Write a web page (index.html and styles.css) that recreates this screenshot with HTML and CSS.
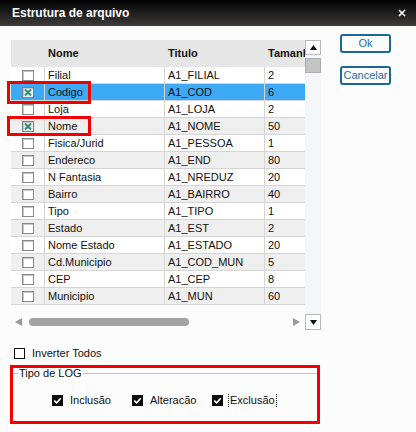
FILE: index.html
```html
<!DOCTYPE html>
<html>
<head>
<meta charset="utf-8">
<link rel="stylesheet" href="styles.css">
</head>
<body>
<div class="window">
  <div class="titlebar">
    <span class="title">Estrutura de arquivo</span>
    <svg class="close" width="8" height="8" viewBox="0 0 8 8"><path d="M1 1L7 7M7 1L1 7" stroke="#fff" stroke-width="1.6"/></svg>
  </div>
  <div class="main">
    <div class="gridbox">
      <div class="grid-area">
        <div class="table">
          <div class="row hdr"><div class="c chk"></div><div class="c">Nome</div><div class="c">Titulo</div><div class="c">Tamanho</div></div>
          <div class="row"><div class="c chk"><span class="cb"></span></div><div class="c">Filial</div><div class="c">A1_FILIAL</div><div class="c">2</div></div>
          <div class="row sel"><div class="c chk"><span class="cb on"></span></div><div class="c">Codigo</div><div class="c">A1_COD</div><div class="c">6</div></div>
          <div class="row"><div class="c chk"><span class="cb"></span></div><div class="c">Loja</div><div class="c">A1_LOJA</div><div class="c">2</div></div>
          <div class="row alt"><div class="c chk"><span class="cb on"></span></div><div class="c">Nome</div><div class="c">A1_NOME</div><div class="c">50</div></div>
          <div class="row"><div class="c chk"><span class="cb"></span></div><div class="c">Fisica/Jurid</div><div class="c">A1_PESSOA</div><div class="c">1</div></div>
          <div class="row alt"><div class="c chk"><span class="cb"></span></div><div class="c">Endereco</div><div class="c">A1_END</div><div class="c">80</div></div>
          <div class="row"><div class="c chk"><span class="cb"></span></div><div class="c">N Fantasia</div><div class="c">A1_NREDUZ</div><div class="c">20</div></div>
          <div class="row alt"><div class="c chk"><span class="cb"></span></div><div class="c">Bairro</div><div class="c">A1_BAIRRO</div><div class="c">40</div></div>
          <div class="row"><div class="c chk"><span class="cb"></span></div><div class="c">Tipo</div><div class="c">A1_TIPO</div><div class="c">1</div></div>
          <div class="row alt"><div class="c chk"><span class="cb"></span></div><div class="c">Estado</div><div class="c">A1_EST</div><div class="c">2</div></div>
          <div class="row"><div class="c chk"><span class="cb"></span></div><div class="c">Nome Estado</div><div class="c">A1_ESTADO</div><div class="c">20</div></div>
          <div class="row alt"><div class="c chk"><span class="cb"></span></div><div class="c">Cd.Municipio</div><div class="c">A1_COD_MUN</div><div class="c">5</div></div>
          <div class="row"><div class="c chk"><span class="cb"></span></div><div class="c">CEP</div><div class="c">A1_CEP</div><div class="c">8</div></div>
          <div class="row alt"><div class="c chk"><span class="cb"></span></div><div class="c">Municipio</div><div class="c">A1_MUN</div><div class="c">60</div></div>
        </div>
        <div class="hscroll">
          <svg class="harrow" width="7" height="8" viewBox="0 0 7 8"><path d="M7 0L0 4L7 8Z" fill="#9a9a9a"/></svg>
          <span class="hthumb"></span>
          <svg class="harrow right" width="7" height="8" viewBox="0 0 7 8"><path d="M0 0L7 4L0 8Z" fill="#9a9a9a"/></svg>
        </div>
      </div>
      <div class="vscroll">
        <div class="vbtn"><svg width="7" height="5" viewBox="0 0 7 5"><path d="M3.5 0L7 5H0Z" fill="#0a0f1c"/></svg></div>
        <div class="vthumb"></div>
        <div class="vbtn down"><svg width="7" height="5" viewBox="0 0 7 5"><path d="M0 0H7L3.5 5Z" fill="#0a0f1c"/></svg></div>
      </div>
      <div class="mark mark1"></div>
      <div class="mark mark2"></div>
    </div>
    <div class="buttons">
      <div class="btn">Ok</div>
      <div class="btn">Cancelar</div>
    </div>
  </div>
  <div class="invert"><span class="box"></span><span>Inverter Todos</span></div>
  <div class="logbox">
    <div class="legend"><span>Tipo de LOG</span></div>
    <div class="opts">
      <div class="opt"><span class="chkd"></span><span class="lbl">Inclusão</span></div>
      <div class="opt"><span class="chkd"></span><span class="lbl">Alteracão</span></div>
      <div class="opt"><span class="chkd"></span><span class="lbl focus">Exclusão</span></div>
    </div>
  </div>
</div>
</body>
</html>
```
FILE: styles.css
```css
* { box-sizing: border-box; }
html, body { margin: 0; padding: 0; }
body {
  width: 416px;
  height: 432px;
  overflow: hidden;
  background: #fcfcfc;
  font-family: "Liberation Sans", Arial, sans-serif;
  font-size: 11px;
  color: #111;
}
.window { width: 416px; height: 432px; }
.titlebar {
  height: 26px;
  background: linear-gradient(#020202, #3d3b3a);
  display: flex;
  align-items: center;
  justify-content: space-between;
  padding: 0 10px 0 12px;
}
.title { color: #fff; font-weight: bold; font-size: 12px; }
.close { display: block; }
.main { display: flex; padding: 8px 0 0 11px; }
.gridbox {
  position: relative;
  display: flex;
  margin-top: 6px;
  width: 310px;
  height: 290px;
}
.grid-area { width: 294px; display: flex; flex-direction: column; }
.table { width: 294px; overflow: hidden; }
.row {
  display: grid;
  grid-template-columns: 34px 120px 100px 80px;
  height: 17px;
  border-bottom: 1px solid #d5d5d5;
  background: #fff;
  line-height: 16px;
  white-space: nowrap;
}
.row.alt { background: #efefef; }
.row.sel { background: #3ea9f5; }
.row.hdr {
  height: 27px;
  line-height: 27px;
  background: #e6e6e6;
  border-bottom: none;
  font-weight: bold;
}
.c { border-right: 1px solid #d5d5d5; padding-left: 3px; overflow: hidden; }
.hdr .c { border-right: none; }
.c.chk { display: flex; align-items: center; justify-content: center; padding-left: 0; }
.cb {
  display: block;
  width: 12px;
  height: 11px;
  border: 1px solid #8a8a8a;
  background: #fff;
  box-shadow: inset 1px 1px 0 #c8c8c8;
}
.cb.on {
  background: #eaf1ee url("data:image/svg+xml,%3Csvg xmlns='http://www.w3.org/2000/svg' width='10' height='9' viewBox='0 0 10 9'%3E%3Cpath d='M2 1.5L8 7.5M8 1.5L2 7.5' stroke='%23348f7a' stroke-width='2'/%3E%3C/svg%3E") center no-repeat;
  border-color: #7a8582;
}
.hscroll {
  margin-top: auto;
  height: 16px;
  display: flex;
  align-items: center;
  padding-left: 4px;
}
.harrow { display: block; }
.hthumb {
  display: block;
  width: 160px;
  height: 8px;
  border-radius: 4px;
  background: #a3a3a3;
  margin-left: 7px;
}
.harrow.right { margin-left: 104px; }
.vscroll {
  width: 16px;
  height: 290px;
  background: #f5f6f9;
  display: flex;
  flex-direction: column;
}
.vbtn {
  height: 15px;
  border: 1px solid #b9b9b9;
  background: #fff;
  display: flex;
  align-items: center;
  justify-content: center;
}
.vbtn svg { display: block; }
.vbtn.down { margin-top: auto; height: 16px; }
.vthumb {
  margin-top: 3px;
  height: 15px;
  background: #c4c4c4;
  border: 1px solid #adadad;
}
.mark {
  position: absolute;
  border: 3px solid #f20000;
  left: -4px;
  width: 84px;
}
.mark1 { top: 41px; height: 23px; }
.mark2 { top: 76px; height: 20px; }
.buttons { margin-left: 19px; display: flex; flex-direction: column; gap: 13px; }
.btn {
  width: 51px;
  height: 19px;
  border: 2px solid #1a6896;
  border-radius: 3px;
  color: #1d6fa6;
  text-align: center;
  line-height: 15px;
  background: #fcfcfc;
}
.invert {
  display: flex;
  align-items: center;
  height: 14px;
  margin: 16px 0 0 14px;
}
.invert .box {
  width: 11px;
  height: 11px;
  border: 1px solid #111;
  background: #fff;
  margin-right: 7px;
}
.logbox {
  margin: 5px 0 0 10px;
  width: 310px;
  height: 59px;
  border: 3px solid #f20000;
}
.legend {
  display: flex;
  align-items: center;
  height: 11px;
  line-height: 11px;
}
.legend::before { content: ""; width: 5px; border-top: 1px solid #c4c4c4; }
.legend::after { content: ""; flex: 1; border-top: 1px solid #c4c4c4; margin-left: 1px; }
.legend span { padding-left: 1px; }
.opts { display: flex; margin-top: 14px; padding-left: 39px; height: 14px; }
.opt { width: 80px; display: flex; align-items: center; }
.chkd {
  width: 11px;
  height: 11px;
  background: #0d0d0d url("data:image/svg+xml,%3Csvg xmlns='http://www.w3.org/2000/svg' width='11' height='11' viewBox='0 0 11 11'%3E%3Cpath d='M2.3 5.6L4.6 7.8L8.8 3.2' fill='none' stroke='%23fff' stroke-width='1.7'/%3E%3C/svg%3E") center no-repeat;
}
.lbl {
  margin-left: 5px;
  padding: 0 1px;
  border-left: 1px dotted transparent;
  border-right: 1px dotted transparent;
  line-height: 13px;
}
.lbl.focus { border-left-color: #222; border-right-color: #222; }
```
